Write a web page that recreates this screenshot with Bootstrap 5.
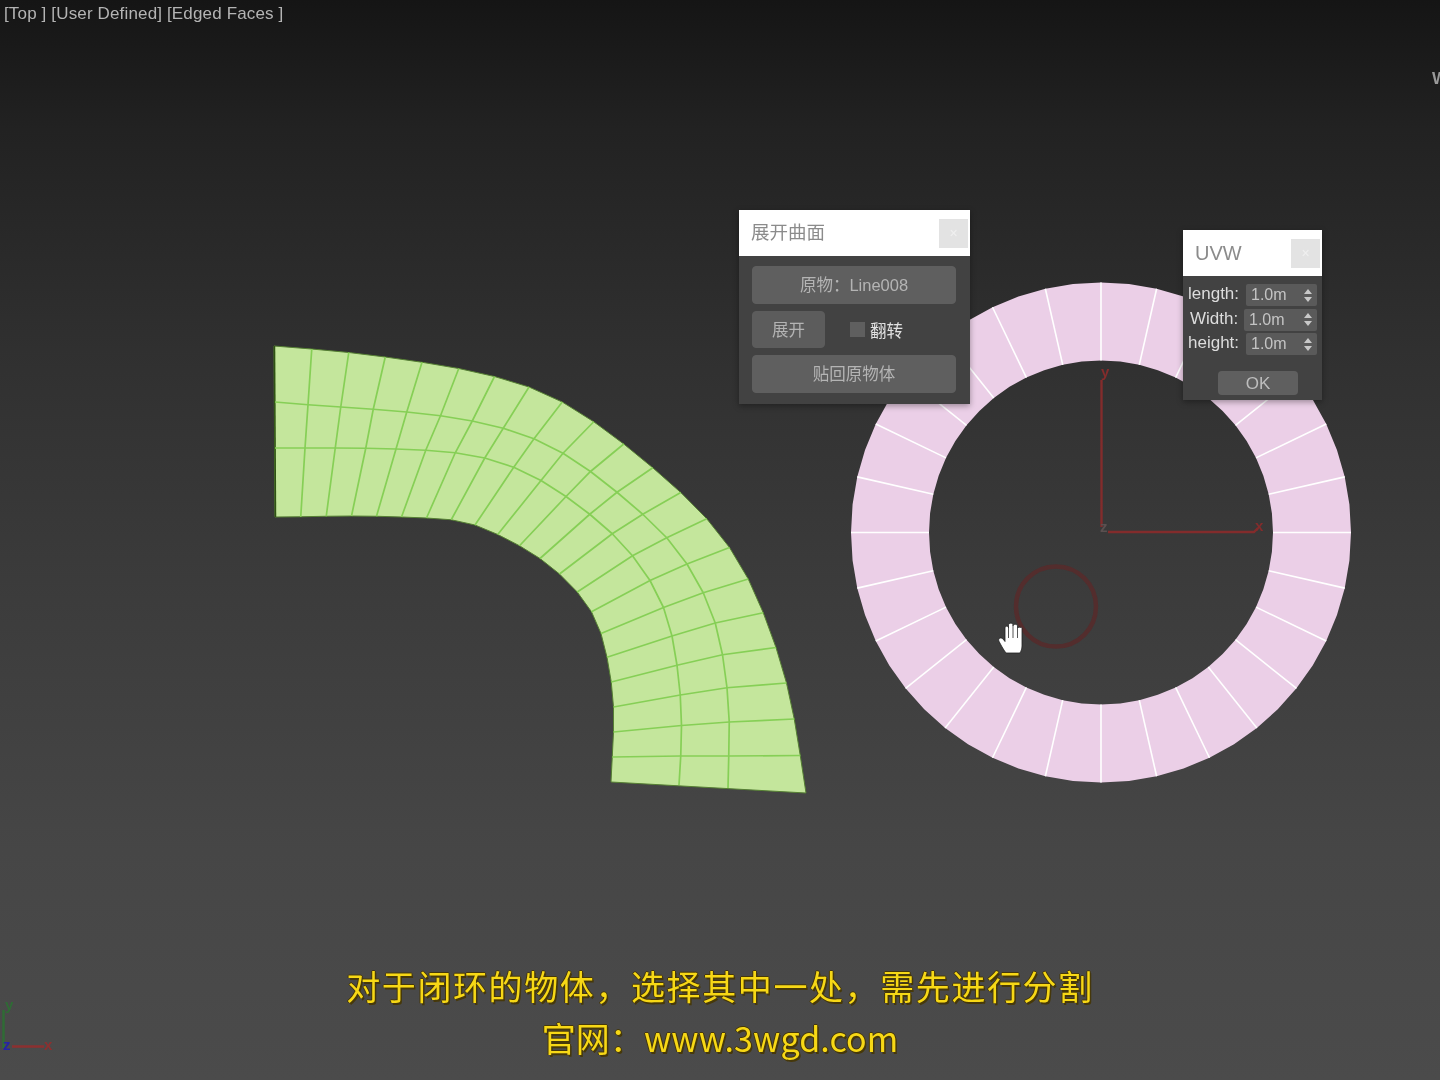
<!DOCTYPE html>
<html lang="zh">
<head>
  <meta charset="UTF-8">
  <meta name="viewport" content="width=device-width, initial-scale=1.0">
  <link href="https://cdn.jsdelivr.net/npm/bootstrap@5.3.0/dist/css/bootstrap.min.css" rel="stylesheet">
  <title>UVW viewport</title>
  <style>
    body { margin: 0; background: #222; font-family: "Liberation Sans", "Noto Sans CJK SC", sans-serif; }
    .viewport {
      width: 1440px; height: 1080px; overflow: hidden; filter: blur(.45px);
      background: linear-gradient(to bottom, #151515 0, #222 130px, #303030 350px, #3c3c3c 600px, #464646 850px, #4b4b4b 1080px);
    }
    .scene { left: 0; top: 0; }
    .view-label { left: 4px; top: 1px; font-size: 17px; letter-spacing: .15px; color: #b4b4b4; white-space: nowrap; }
    .cube-letter { left: 1432px; top: 66px; font-size: 17px; font-weight: 700; color: #9a9a9a; }

    .float-win { background: #424242; box-shadow: 0 2px 6px rgba(0,0,0,.35); }
    .win-unwrap { left: 739px; top: 210px; width: 231px; }
    .win-uvw { left: 1183px; top: 230px; width: 139px; }
    .win-title { height: 46px; background: #fff; color: #8b8b8b; font-size: 20px; padding: 0 2px 0 12px; }
    .win-unwrap .win-title { font-size: 18.5px; }
    .win-close { width: 29px; height: 29px; background: #e3e3e3; color: #f0f0f0; font-size: 14px; line-height: 29px; text-align: center; }
    .unwrap-body { padding: 10px 14px 11px 13px; gap: 7px; }
    .tool-btn {
      --bs-btn-bg: #5f5f5f; --bs-btn-color: #b4b4b4; --bs-btn-border-color: #5f5f5f;
      --bs-btn-hover-bg: #6a6a6a; --bs-btn-hover-color: #ccc; --bs-btn-hover-border-color: #6a6a6a;
      --bs-btn-font-size: 16.5px; --bs-btn-border-radius: 4px;
      padding: 0; height: 38px; line-height: 36px;
    }
    .btn-short { width: 73px; height: 37px; --bs-btn-bg: #5c5c5c; --bs-btn-border-color: #5c5c5c; }
    .flip-box { width: 15px; height: 15px; background: #5f5f5f; flex: none; margin-left: 25px; }
    .flip-text { color: #e2e2e2; font-size: 16.5px; margin-left: 5px; padding-top: 3px; }

    .uvw-body { padding: 8px 5px 5px 5px; height: 124px; }
    .uvw-row { height: 22px; }
    .uvw-row + .uvw-row { margin-top: 2.5px; }
    .uvw-label { width: 58px; color: #dcdcdc; font-size: 17px; line-height: 20px; white-space: nowrap; flex: none; }
    .uvw-label-short { width: 56px; padding-left: 2px; }
    .spin-field { background: #5a5a5a; color: #c4c4c4; font-size: 16px; width: 71px; height: 22px; line-height: 22px; padding: 0 5px; border-radius: 2px; }
    .spin-wide { width: 73px; }
    .uvw-ok { width: 80px; height: 24px; line-height: 24px; padding-top: 1px; --bs-btn-font-size: 17px; --bs-btn-color: #bdbdbd; border: 0; margin: 16px 0 0 30px; display: block; }

    .subtitles {
      left: 0; right: 0; top: 960px; color: #f7d816; font-size: 34px; line-height: 52px; letter-spacing: 1.6px;
      font-family: "Noto Sans CJK SC", sans-serif; text-shadow: 1.5px 2px 0 #46380a, -1px 0 0 #46380a, 1px 0 0 #46380a, 0 -1px 0 #46380a;
    }
    .sub-site { letter-spacing: .1px; }
    .axis-text { font-family: "Liberation Sans", sans-serif; font-size: 15px; font-weight: 700; }
  </style>
</head>
<body>
  <div class="viewport position-relative">
    <svg id="scene" class="scene position-absolute" width="1440" height="1080" viewBox="0 0 1440 1080">
      <g id="mesh"></g>
      <g id="ring"></g>

      <!-- world axis in the ring -->
      <g stroke="#832c2c" stroke-width="2.4" fill="none">
        <path d="M1101.5 380V527"/>
        <path d="M1108 532H1254L1258 528"/>
      </g>
      <text class="axis-text" x="1101" y="377" fill="#832c2c">y</text>
      <text class="axis-text" x="1255" y="531" fill="#832c2c">x</text>
      <text class="axis-text" x="1100" y="532" fill="#5b5050">z</text>

      <circle cx="1056" cy="606.5" r="40" fill="none" stroke="#532d2d" stroke-width="4.5"/>

      <!-- hand cursor -->
      <g transform="translate(998 622)">
        <path d="M8 31C5 27 3 23 .8 19C0 16 3 15 5 17L7 19.5V6C7 3.5 10.5 3.5 10.5 6V3C10.5 .5 15 .5 15 3V4C15 1.8 19.5 1.8 19.5 4V6.5C19.5 4.8 24 4.8 24 6.5V24C24 27 23 29 22 31Z" fill="#fff" stroke="#222" stroke-width=".8" stroke-linejoin="round"/>
        <path d="M10.5 6V16M15 4V16M19.5 6V16" stroke="#555" stroke-width="1" fill="none"/>
      </g>

      <!-- corner axis tripod -->
      <path d="M3.5 1048V1010" stroke="#2f6b35" stroke-width="2.5" fill="none"/>
      <path d="M12 1046.5H44" stroke="#8c3030" stroke-width="2.5" fill="none"/>
      <text class="axis-text" x="5" y="1010" fill="#2f6b35">y</text>
      <text class="axis-text" x="44" y="1050" fill="#8c3030">x</text>
      <text class="axis-text" x="3" y="1050" fill="#2424a8">z</text>
    </svg>

    <div class="view-label position-absolute">[Top ] [User Defined] [Edged Faces ]</div>
    <div class="cube-letter position-absolute">W</div>

    <!-- unwrap dialog -->
    <div class="float-win win-unwrap position-absolute">
      <div class="win-title d-flex align-items-center justify-content-between">
        <span>展开曲面</span>
        <span class="win-close">×</span>
      </div>
      <div class="unwrap-body d-flex flex-column">
        <button type="button" class="btn tool-btn w-100">原物：Line008</button>
        <div class="d-flex align-items-center">
          <button type="button" class="btn tool-btn btn-short">展开</button>
          <span class="flip-box"></span>
          <span class="flip-text">翻转</span>
        </div>
        <button type="button" class="btn tool-btn w-100">贴回原物体</button>
      </div>
    </div>

    <!-- uvw dialog -->
    <div class="float-win win-uvw position-absolute">
      <div class="win-title d-flex align-items-center justify-content-between">
        <span>UVW</span>
        <span class="win-close">×</span>
      </div>
      <div class="uvw-body">
        <div class="uvw-row d-flex">
          <span class="uvw-label">length:</span>
          <div class="spin-field d-flex justify-content-between align-items-center"><span>1.0m</span><svg width="8" height="13" viewBox="0 0 8 13"><path d="M4 0 8 5H0ZM0 8H8L4 13Z" fill="#c8c8c8"/></svg></div>
        </div>
        <div class="uvw-row d-flex">
          <span class="uvw-label uvw-label-short">Width:</span>
          <div class="spin-field spin-wide d-flex justify-content-between align-items-center"><span>1.0m</span><svg width="8" height="13" viewBox="0 0 8 13"><path d="M4 0 8 5H0ZM0 8H8L4 13Z" fill="#c8c8c8"/></svg></div>
        </div>
        <div class="uvw-row d-flex">
          <span class="uvw-label">height:</span>
          <div class="spin-field d-flex justify-content-between align-items-center"><span>1.0m</span><svg width="8" height="13" viewBox="0 0 8 13"><path d="M4 0 8 5H0ZM0 8H8L4 13Z" fill="#c8c8c8"/></svg></div>
        </div>
        <button type="button" class="btn tool-btn uvw-ok">OK</button>
      </div>
    </div>

    <div class="subtitles position-absolute text-center">
      <div>对于闭环的物体，选择其中一处，需先进行分割</div>
      <div class="sub-site">官网：www.3wgd.com</div>
    </div>
  </div>

  <script>
    const SVG_NS = 'http://www.w3.org/2000/svg';

    const addShape = (parent, tag, attrs) => {
      const el = document.createElementNS(SVG_NS, tag);
      Object.entries(attrs).forEach(([k, v]) => el.setAttribute(k, v));
      parent.appendChild(el);
    };
    const toPoints = pts => pts.map(p => p.join(',')).join(' ');

    // pink ring: 28 segments, edges have a midpoint so it reads round
    const ring = document.getElementById('ring');
    const cx = 1101, cy = 532.5, outerR = 250, innerR = 172, segs = 28;
    const outer = [], inner = [];
    for (let i = 0; i < segs * 2; i++) {
      const a = i * Math.PI / segs;
      outer.push([cx + outerR * Math.cos(a), cy + outerR * Math.sin(a)]);
      inner.push([cx + innerR * Math.cos(a), cy + innerR * Math.sin(a)]);
    }
    addShape(ring, 'path', {
      d: 'M' + toPoints(outer) + 'Z M' + toPoints(inner) + 'Z',
      fill: '#ebcfe7', 'fill-rule': 'evenodd'
    });
    outer.forEach((p, i) => {
      if (i % 2) return;
      addShape(ring, 'line', { x1: p[0], y1: p[1], x2: inner[i][0], y2: inner[i][1], stroke: '#fff', 'stroke-width': 1.6 });
    });

    // green unwrapped mesh, measured off the picture
    const smooth = pts => pts.map((p, i) => {
      if (i === 0 || i === pts.length - 1) return p;
      return [0, 1].map(k => (pts[i - 1][k] + 2 * p[k] + pts[i + 1][k]) / 4);
    });
    const topEdge = smooth([[274,346],[312,349],[349,352],[385,357],[422,362],[459,368],[495,376],[529,386],[563,400],[594,422],[624,443],[653,468],[681,492],[708,518],[730,547],[750,578],[763,613],[777,647],[787,683],[795,719],[800,755],[806,793]]);
    const lineA = smooth([[275,402],[308,405],[341,407],[373,409],[406,412],[442,415],[472,421],[503,427],[535,438],[563,452],[591,471],[617,492],[643,514],[668,537],[688,563],[704,593],[717,622],[723,655],[727,687],[731,722],[728,757],[728,788]]);
    const lineB = smooth([[275,448],[305,448],[335,448],[366,448],[396,449],[426,450],[455,452],[485,457],[514,466],[542,480],[566,496],[590,514],[613,533],[633,555],[651,580],[665,607],[673,636],[677,665],[681,695],[682,725],[681,757],[679,785]]);
    const lowEdge = smooth([[275,517],[301,517],[326,516],[352,516],[376,516],[402,517],[426,518],[452,519],[475,523],[498,535],[520,545],[540,558],[560,573],[578,592],[593,611],[602,633],[607,657],[612,682],[614,707],[614,732],[612,757],[611,782]]);

    const mesh = document.getElementById('mesh');
    addShape(mesh, 'polygon', {
      points: toPoints(topEdge.concat(lowEdge.slice().reverse())),
      fill: '#c4e69c', stroke: '#557f33', 'stroke-width': 1
    });
    addShape(mesh, 'line', { x1: 274.5, y1: 346, x2: 275.5, y2: 517, stroke: '#2e5212', 'stroke-width': 1.5 });
    [lineA, lineB].forEach(l => addShape(mesh, 'polyline', {
      points: toPoints(l), fill: 'none', stroke: '#86cf56', 'stroke-width': 1.7, 'stroke-linejoin': 'round'
    }));
    topEdge.forEach((p, i) => {
      if (i === 0 || i === topEdge.length - 1) return;
      addShape(mesh, 'polyline', {
        points: toPoints([p, lineA[i], lineB[i], lowEdge[i]]), fill: 'none', stroke: '#86cf56', 'stroke-width': 1.7
      });
    });
  </script>
  <script src="https://cdn.jsdelivr.net/npm/bootstrap@5.3.0/dist/js/bootstrap.bundle.min.js"></script>
</body>
</html>
